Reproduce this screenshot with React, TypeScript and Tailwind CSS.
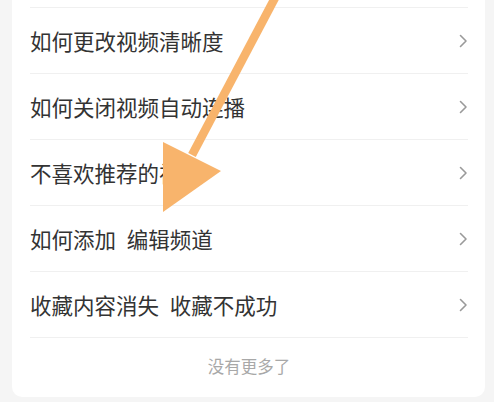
const items = [
  "如何更改视频清晰度",
  "如何关闭视频自动连播",
  "不喜欢推荐的视频",
  "如何添加\u2002编辑频道",
  "收藏内容消失\u2002收藏不成功",
];

const Chevron = () => (
  <svg width="9" height="14" viewBox="0 0 9 14" fill="none">
    <path d="M1.5 1.5 L7 7 L1.5 12.5" stroke="#9a9a9a" strokeWidth="1.6" strokeLinecap="round" strokeLinejoin="round" />
  </svg>
);

export default function App() {
  return (
    <div
      className="relative h-[402px] w-[494px] overflow-hidden bg-[#f5f5f5] pl-[12px] pr-[9px]"
      style={{ fontFamily: '"Noto Sans CJK SC", "Noto Sans", sans-serif' }}
    >
      <div className="rounded-b-[10px] bg-white pt-[7px]">
        <div className="ml-[18px] mr-[17px]">
          {items.map((t) => (
            <div
              key={t}
              className="flex h-[66px] items-center justify-between border-t border-[#f0f0f0]"
            >
              <span className="text-[21.5px] leading-none text-[#333333]">{t}</span>
              <Chevron />
            </div>
          ))}
          <div className="flex h-[60px] items-center justify-center border-t border-[#f0f0f0] pb-[2px]">
            <span className="text-[16.5px] leading-none text-[#a8a8a8]">没有更多了</span>
          </div>
        </div>
      </div>

      {/* annotation arrow */}
      <svg
        className="pointer-events-none absolute left-0 top-0"
        width="494"
        height="402"
        viewBox="0 0 494 402"
      >
        <line x1="276" y1="-4" x2="192" y2="155" stroke="#f8b46c" strokeWidth="8.5" />
        <polygon points="163,142 221,171 163,212" fill="#f8b46c" />
      </svg>
    </div>
  );
}
